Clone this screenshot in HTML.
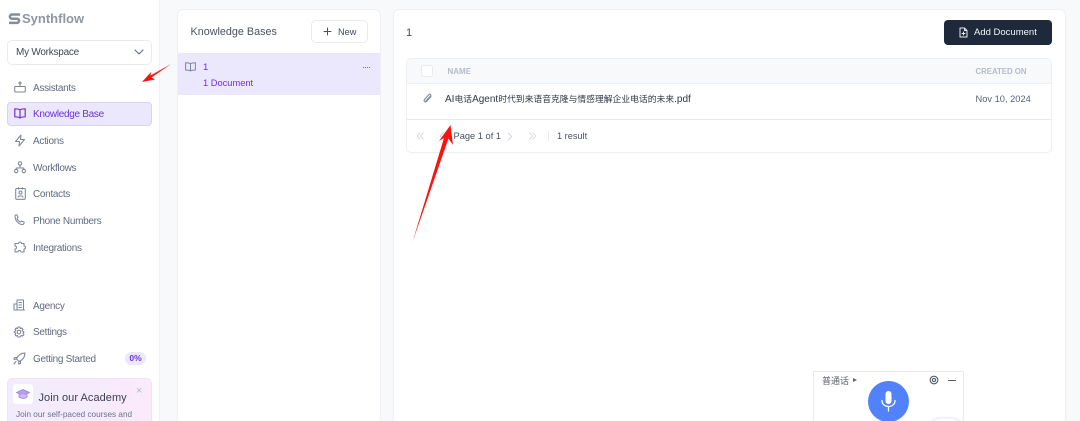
<!DOCTYPE html>
<html><head><meta charset="utf-8">
<style>
*{box-sizing:border-box;margin:0;padding:0}
html,body{width:1080px;height:421px;overflow:hidden;background:#f8f9fb;font-family:"Liberation Sans","Noto Sans CJK SC",sans-serif;color:#414a5a}
#w{position:relative;width:1080px;height:421px;overflow:hidden}
.a{position:absolute}
.t{position:absolute;white-space:nowrap;font-size:10px;line-height:14px}
.n{color:#5f6b80;letter-spacing:-.3px}
svg{position:absolute;fill:none;stroke-linecap:round;stroke-linejoin:round}
.i{stroke:#7c8799;stroke-width:1.050}
.l{font-size:10px}
</style></head><body><div id="w">
<div class="a" style="left:0;top:0;width:160px;height:421px;background:#fff;border-right:1px solid #eef0f4"></div>

<svg style="left:8px;top:13px" width="13" height="12" viewBox="0 0 13 12"><path d="M12 1.500H4a2 2 0 0 0 0 4.200h5a2 2 0 0 1 0 4.200H1" stroke="#858d9b" stroke-width="2.500" stroke-linecap="butt"/></svg>
<div class="t" style="left:22px;top:11px;font-size:13px;line-height:16px;font-weight:700;color:#8f97a5">Synthflow</div>

<div class="a" style="left:7px;top:40px;width:145px;height:25px;background:#fff;border:1px solid #e8eaef;border-radius:5px"></div>
<div class="t" style="left:16px;top:46px;color:#3f4756;letter-spacing:-.25px">My Workspace</div>
<svg style="left:134px;top:48px" width="10" height="8" viewBox="0 0 10 8"><path d="M1 2l4 4 4-4" stroke="#5f6b80" stroke-width="1.100"/></svg>

<svg class="i" style="left:14px;top:81px" width="12" height="12" viewBox="0 0 12 12"><rect x=".7" y="5.500" width="10.600" height="5.500" rx="1"/><path d="M6 5.500V3"/><circle cx="6" cy="2" r="1"/></svg>
<div class="t n" style="left:33px;top:82px">Assistants</div>

<div class="a" style="left:7px;top:102px;width:145px;height:24px;background:#ebe7fd;border:1px solid #d9d1fa;border-radius:4px"></div>
<svg style="left:14px;top:108px;stroke:#6d35d8;stroke-width:1.200" width="12" height="11" viewBox="0 0 12 11"><path d="M6 2C5 1 3 .8 .8 .8V8.800C3 8.800 5 9 6 10 7 9 9 8.800 11.200 8.800V.8C9 .8 7 1 6 2ZM6 2V10"/></svg>
<div class="t" style="left:33px;top:107.500px;color:#6d35d8;letter-spacing:-.3px">Knowledge Base</div>

<svg class="i" style="left:14px;top:134px" width="12" height="13" viewBox="0 0 12 13"><path d="M7 1L1.500 7.500H5M5 12l5.500-6.500H7M7 1L6.500 5.500M5 12l.5-4.500"/></svg>
<div class="t n" style="left:33px;top:134.500px">Actions</div>

<svg class="i" style="left:14px;top:161px" width="12" height="13" viewBox="0 0 12 13"><circle cx="6" cy="2.500" r="1.700"/><circle cx="2.200" cy="10" r="1.700"/><circle cx="9.800" cy="10" r="1.700"/><path d="M6 4.200V7M2.200 8.300V7H9.800V8.300"/></svg>
<div class="t n" style="left:33px;top:161.500px">Workflows</div>

<svg class="i" style="left:15px;top:187px" width="11" height="13" viewBox="0 0 11 13"><rect x=".7" y="1.500" width="9.600" height="10.800" rx="1"/><circle cx="5.500" cy="5.500" r="1.500"/><path d="M3 10c.5-1.500 4.500-1.500 5 0M3.500 .6V2M7.500 .6V2"/></svg>
<div class="t n" style="left:33px;top:188px">Contacts</div>

<svg class="i" style="left:14px;top:214px" width="12" height="12" viewBox="0 0 12 12"><path d="M1 2c0-1 1-1.300 2-1l1 2.500-1 1c.6 1.500 2 3 3.500 3.500l1-1 2.500 1c.3 1-.1 2.500-1.500 2.500C4.500 10.500 1 6.500 1 2Z"/></svg>
<div class="t n" style="left:33px;top:215px">Phone Numbers</div>

<svg class="i" style="left:14px;top:241px" width="12" height="12" viewBox="0 0 12 12"><path d="M4.500 2.500a1.500 1.500 0 0 1 3 0H10V5a1.500 1.500 0 0 1 0 3v3H7a1.500 1.500 0 0 0-3 0H1V8a1.500 1.500 0 0 0 0-3V2.500Z"/></svg>
<div class="t n" style="left:33px;top:242px">Integrations</div>

<svg class="i" style="left:13px;top:299px" width="12" height="12" viewBox="0 0 12 12"><path d="M4 11V1h6.500v10M4 11H1V5h3M11.500 11H1M6 3.500h2.500M6 6h2.500M6 8.500h2.500"/></svg>
<div class="t n" style="left:33px;top:300px">Agency</div>

<svg class="i" style="left:13px;top:326px" width="12" height="12" viewBox="0 0 12 12"><circle cx="6" cy="6" r="1.800"/><path d="M5 1h2l.4 1.500 1.400-.5 1.200 1.400-.9 1.300L11 6l-1 1.300.9 1.300-1.200 1.400-1.400-.5L7 11H5l-.4-1.500-1.400.5L2 8.600l.9-1.300L1 6l1.900-1.300L2 3.400 3.200 2l1.400.5Z"/></svg>
<div class="t n" style="left:33px;top:326px">Settings</div>

<svg class="i" style="left:13px;top:352px" width="13" height="13" viewBox="0 0 13 13"><path d="M12 1C8 1 5 3.500 3.500 7L6 9.500C9.500 8 12 5 12 1ZM4 5.500H1.500L1 7.500l2.500-.5M7.500 9v2.500L5.500 12 6 9.500M1 12l2-2.500"/></svg>
<div class="t n" style="left:33px;top:353px">Getting Started</div>
<div class="a" style="left:125px;top:352px;width:21px;height:13px;background:#ebe7fd;border-radius:7px;font-size:8.500px;line-height:13px;font-weight:700;color:#6d35d8;text-align:center">0%</div>

<div class="a" style="left:7px;top:378px;width:145px;height:43px;border:1px solid #eee3fb;border-bottom:0;border-radius:6px 6px 0 0;background:linear-gradient(100deg,#f1ecfe,#faeafb)"></div>
<div class="a" style="left:13px;top:384px;width:20px;height:20px;background:#fff;border-radius:3px"></div>
<svg style="left:16px;top:389px" width="14" height="11" viewBox="0 0 14 11"><path d="M7 .5L13.500 3.500 7 6.500 .5 3.500Z" fill="#b9a0ef" stroke="#9a7fe4" stroke-width=".8"/><path d="M3 5.500V8c2 1.800 6 1.800 8 0V5.500" fill="#cdbcf4" stroke="#9a7fe4" stroke-width=".8"/></svg>
<div class="t" style="left:38.500px;top:390.500px;font-size:11px;color:#3a4150;letter-spacing:.05px">Join our Academy</div>
<div class="t" style="left:136px;top:384px;font-size:11px;color:#b9bdc9">×</div>
<div class="t" style="left:16px;top:407.500px;font-size:8.200px;color:#6b7385">Join our self-paced courses and</div>

<div class="a" style="left:177px;top:9px;width:204px;height:412px;background:#fff;border:1px solid #eef0f4;border-bottom:0;border-radius:6px 6px 0 0"></div>
<div class="t" style="left:190.500px;top:25px;font-size:10.800px;color:#4a5261">Knowledge Bases</div>
<div class="a" style="left:311px;top:20px;width:57px;height:23px;background:#fff;border:1px solid #e8eaef;border-radius:5px"></div>
<svg style="left:323px;top:27px" width="9" height="9" viewBox="0 0 9 9"><path d="M4.500 1v7M1 4.500h7" stroke="#4a5261" stroke-width="1"/></svg>
<div class="t" style="left:338px;top:25px;font-size:9.200px;color:#414a5a">New</div>
<div class="a" style="left:178px;top:53px;width:202px;height:1px;background:#e8e9f1"></div>
<div class="a" style="left:178px;top:54px;width:202px;height:41px;background:#ebe7fd"></div>
<svg style="left:185px;top:62px;stroke:#7e86a0;stroke-width:1" width="11" height="10" viewBox="0 0 11 10"><path d="M5.500 1.800C4.500 1 2.500 .7 .6 .7V8c2 0 4 .2 4.900 1 .9-.8 2.900-1 4.900-1V.7C8.500 .7 6.500 1 5.500 1.800ZM5.500 1.800V9"/></svg>
<div class="t" style="left:203px;top:61px;font-size:9.500px;color:#6d35d8">1</div>
<div class="t" style="left:203px;top:76px;font-size:9.300px;color:#6d35d8">1 Document</div>
<div class="a" style="left:362.500px;top:67px;width:7px;height:1px;border-top:1px dotted #6b7688"></div>

<div class="a" style="left:393px;top:9px;width:673px;height:412px;background:#fff;border:1px solid #eef0f4;border-bottom:0;border-radius:6px 6px 0 0"></div>
<div class="t" style="left:406px;top:26px;font-size:11px;color:#414a5a">1</div>
<div class="a" style="left:944px;top:20px;width:108px;height:25px;background:#1e293b;border-radius:4px"></div>
<svg style="left:959px;top:27px;stroke:#e8eaef;stroke-width:1" width="9" height="11" viewBox="0 0 9 11"><path d="M1 1h4.500L8 3.500V10H1ZM5.500 1v2.500H8M4.500 5v3M3 6.500h3"/></svg>
<div class="t" style="left:974px;top:26px;font-size:9.500px;color:#f4f5f8">Add Document</div>

<div class="a" style="left:406px;top:58px;width:646px;height:95px;background:#fff;border:1px solid #eceef2;border-radius:5px;overflow:hidden">
  <div class="a" style="left:0;top:0;width:644px;height:25px;background:#f8f9fb;border-bottom:1px solid #eef0f4"></div>
  <div class="a" style="left:0;top:60px;width:644px;height:1px;background:#e8eaef"></div>
</div>
<div class="a" style="left:421px;top:65px;width:12px;height:12px;background:#fff;border:1px solid #e8eaef;border-radius:3px"></div>
<div class="t" style="left:447.500px;top:64.500px;font-size:8px;font-weight:700;color:#b4bacb">NAME</div>
<div class="t" style="left:975.500px;top:64.500px;font-size:7.800px;font-weight:700;color:#b4bacb">CREATED ON</div>
<svg style="left:422px;top:93px;stroke:#858d9d;stroke-width:1.100" width="10" height="11" viewBox="0 0 10 11"><path d="M9 3.500L4.500 8.500a1.400 1.400 0 0 1-2-2L7 1.500a1 1 0 0 1 1.500 1.500L3.800 8"/></svg>
<div class="t" style="left:445px;top:91.500px;font-size:8.800px;color:#2f3745"><span class="l">AI</span>电话<span class="l">Agent</span>时代到来语音克隆与情感理解企业电话的未来<span class="l">.pdf</span></div>
<div class="t" style="left:975.500px;top:91.500px;font-size:9.300px;color:#5a6273">Nov 10, 2024</div>

<svg style="left:416px;top:132px;stroke:#ced2da;stroke-width:1" width="9" height="8" viewBox="0 0 10 10"><path d="M4.500 1L1 5l3.500 4M8.500 1L5 5l3.500 4"/></svg>
<svg style="left:439px;top:131px;stroke:#ced2da;stroke-width:1" width="6" height="10" viewBox="0 0 6 10"><path d="M5 1L1 5l4 4"/></svg>
<div class="t" style="left:453.500px;top:128.500px;font-size:9.300px;color:#4a5261">Page 1 of 1</div>
<svg style="left:507px;top:131.500px;stroke:#ced2da;stroke-width:1" width="6" height="9" viewBox="0 0 6 10"><path d="M1 1l4 4-4 4"/></svg>
<svg style="left:528px;top:132px;stroke:#ced2da;stroke-width:1" width="9" height="8" viewBox="0 0 10 10"><path d="M1.500 1L5 5 1.500 9M5.500 1L9 5 5.500 9"/></svg>
<div class="a" style="left:548px;top:131px;width:1px;height:10px;background:#e8eaef"></div>
<div class="t" style="left:557px;top:128.500px;font-size:9.200px;color:#4a5261">1 result</div>

<div class="a" style="left:813px;top:371px;width:151px;height:50px;background:#fff;border:1px solid #e9e9ec;border-bottom:0"></div>
<div class="t" style="left:822px;top:374px;font-size:9px;color:#5c5f66">普通话</div>
<div class="a" style="left:853px;top:378px;border-left:4px solid #666;border-top:2.500px solid transparent;border-bottom:2.500px solid transparent"></div>
<svg style="left:929px;top:375px;stroke:#555a63;stroke-width:1.100" width="10" height="10" viewBox="0 0 10 10"><circle cx="5" cy="5" r="3.800"/><circle cx="5" cy="5" r="1.600"/></svg>
<div class="a" style="left:948px;top:380px;width:8px;height:1.200px;background:#555a63"></div>
<svg style="left:868px;top:381px" width="41" height="40" viewBox="0 0 41 40"><circle cx="20.500" cy="20.500" r="20.500" fill="#5182fb"/></svg>
<svg style="left:880px;top:390px" width="17" height="23" viewBox="0 0 17 23"><rect x="5.500" y="1" width="6" height="13" rx="3" fill="#fff"/><path d="M2 10.500c0 8 13 8 13 0M8.500 17v4" stroke="#fff" stroke-width="1.300"/></svg>
<svg style="left:928px;top:415px" width="36" height="6" viewBox="0 0 36 6"><path d="M4 6C9 1.500 27 1.500 32 6" stroke="#eef2fc" stroke-width="2"/></svg>

<svg style="left:140px;top:62px" width="34" height="22" viewBox="0 0 34 22"><path d="M31 2L10.500 13.500 11 10 2 20 15 17.500 11.500 15.500Z" fill="#f5140f"/></svg>
<svg style="left:408px;top:124px" width="50" height="122" viewBox="0 0 50 122"><path d="M4.500 118L36 14 31 17 42.500 1 45 21 40.500 14.500Z" fill="#f5140f"/></svg>
</div></body></html>
